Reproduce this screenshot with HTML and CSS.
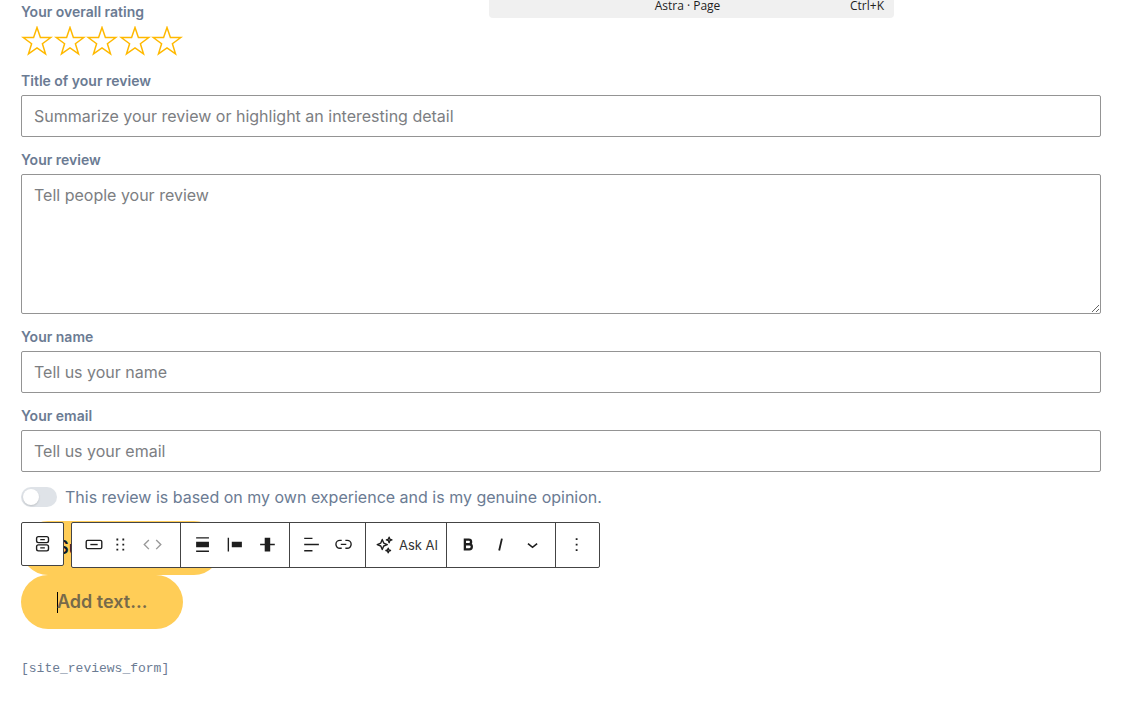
FILE: index.html
```html
<!DOCTYPE html>
<html lang="en">
<head>
  <meta charset="UTF-8">
  <meta name="viewport" content="width=device-width, initial-scale=1.0">
  <title>Astra · Page</title>
  <link rel="stylesheet" href="styles.css">
</head>
<body>
  <button type="button" class="command-bar">
    <span class="command-title">Astra · Page</span>
    <span>Ctrl+K</span>
  </button>

  <svg width="0" height="0" class="sprite">
    <symbol id="star" viewBox="0 0 32 32">
      <path d="M16 1.500l3.400 9.900 10.400.1-8.400 6.200 3.100 10.200-8.500-6-8.500 6 3.100-10.200-8.400-6.200 10.400-.1z" fill="none" stroke="#ffb900" stroke-width="1.500"/>
    </symbol>
  </svg>

  <form class="review-form">
    <div class="field">
      <span class="field-label" id="rating-label">Your overall rating</span>
      <div class="stars" role="radiogroup" aria-labelledby="rating-label">
        <label><input type="radio" name="rating" value="1" aria-label="1 star"><svg><use href="#star"/></svg></label>
        <label><input type="radio" name="rating" value="2" aria-label="2 stars"><svg><use href="#star"/></svg></label>
        <label><input type="radio" name="rating" value="3" aria-label="3 stars"><svg><use href="#star"/></svg></label>
        <label><input type="radio" name="rating" value="4" aria-label="4 stars"><svg><use href="#star"/></svg></label>
        <label><input type="radio" name="rating" value="5" aria-label="5 stars"><svg><use href="#star"/></svg></label>
      </div>
    </div>
    <div class="field">
      <label class="field-label" for="title">Title of your review</label>
      <input class="control" type="text" id="title" placeholder="Summarize your review or highlight an interesting detail">
    </div>
    <div class="field">
      <label class="field-label" for="content">Your review</label>
      <textarea class="control" id="content" placeholder="Tell people your review"></textarea>
    </div>
    <div class="field">
      <label class="field-label" for="name">Your name</label>
      <input class="control" type="text" id="name" placeholder="Tell us your name">
    </div>
    <div class="field">
      <label class="field-label" for="email">Your email</label>
      <input class="control" type="email" id="email" placeholder="Tell us your email">
    </div>
    <div class="terms">
      <input class="toggle" type="checkbox" id="terms">
      <label for="terms">This review is based on my own experience and is my genuine opinion.</label>
    </div>

    <div class="buttons">
      <button type="submit" class="btn">Submit Review</button>
      <button type="button" class="btn btn-empty"><span class="caret"></span>Add text…</button>

      <div class="toolbars">
        <div class="toolbar parent">
          <button type="button" aria-label="Select parent block: Buttons">
            <svg width="24" height="24" viewBox="0 0 24 24" fill="none" stroke="#1e1e1e" stroke-width="1.5"><rect x="5" y="4" width="13" height="6.500" rx="2"/><rect x="5" y="13" width="13" height="6.500" rx="2"/><path d="M9 7.250h5M9 16.250h5"/></svg>
          </button>
        </div>
        <div class="toolbar">
          <div class="group group-block">
            <button type="button" aria-label="Button">
              <svg width="24" height="24" viewBox="0 0 24 24" fill="none" stroke="#1e1e1e" stroke-width="1.5"><rect x="3.500" y="7" width="17" height="9" rx="1.5"/><path d="M8 11.500h8"/></svg>
            </button>
            <button type="button" aria-label="Drag">
              <svg width="24" height="24" viewBox="0 0 24 24" fill="#1e1e1e"><path d="M7 5h2v2H7zM13.500 5h2v2h-2zM7 10.500h2v2H7zM13.500 10.500h2v2h-2zM7 16h2v2H7zM13.500 16h2v2h-2z"/></svg>
            </button>
            <button type="button" aria-label="Move" class="movers" disabled>
              <svg width="24" height="24" viewBox="0 0 24 24" fill="none" stroke="#999" stroke-width="1.5"><path d="M7.500 6.500l-5 5 5 5M15.500 6.500l5 5-5 5"/></svg>
            </button>
          </div>
          <div class="group group-layout">
            <button type="button" aria-label="Align">
              <svg width="24" height="24" viewBox="0 0 24 24" fill="#1e1e1e"><path d="M4.500 3.500h14V5h-14zM4.500 8.500h14v6h-14zM4.500 18h14v1.500h-14z"/></svg>
            </button>
            <button type="button" aria-label="Justify left">
              <svg width="24" height="24" viewBox="0 0 24 24" fill="#1e1e1e"><path d="M4 4h1.500v15H4zM8.500 8.500h11v6h-11z"/></svg>
            </button>
            <button type="button" aria-label="Vertical align">
              <svg width="24" height="24" viewBox="0 0 24 24" fill="#1e1e1e"><path d="M4.500 10.750h16v1.500h-16zM9.500 4h6v15h-6z"/></svg>
            </button>
          </div>
          <div class="group group-text">
            <button type="button" aria-label="Align text">
              <svg width="24" height="24" viewBox="0 0 24 24" fill="#1e1e1e"><path d="M3.500 4h9v1.500h-9zM3.500 10.750h16v1.500h-16zM3.500 17.500h9V19h-9z"/></svg>
            </button>
            <button type="button" aria-label="Link">
              <svg width="24" height="24" viewBox="0 0 24 24" fill="none" stroke="#1e1e1e" stroke-width="1.500"><path d="M9.500 7H7.500a4.300 4.300 0 0 0 0 8.600h2M13.500 7h2a4.300 4.300 0 0 1 0 8.600h-2M8.500 11.300h6"/></svg>
            </button>
          </div>
          <div class="group group-ai">
            <button type="button">
              <svg width="24" height="24" viewBox="0 0 24 24" fill="none" stroke="#1e1e1e" stroke-width="1.500" stroke-linejoin="round"><path d="M9 6l1.600 3.900 3.900 1.600-3.900 1.600L9 17l-1.600-3.900-3.900-1.600 3.900-1.600zM16.500 3.500l.8 2.200 2.200.8-2.200.8-.8 2.200-.8-2.200-2.200-.8 2.200-.8zM15.500 15.500l.7 1.800 1.800.7-1.800.7-.7 1.800-.7-1.800-1.800-.7 1.800-.7z"/></svg>
              Ask AI
            </button>
          </div>
          <div class="group group-format">
            <button type="button" aria-label="Bold">
              <svg width="24" height="24" viewBox="0 0 24 24" fill="none" stroke="#1e1e1e" stroke-width="2.500"><path d="M7.500 6.200h4.300a2.500 2.500 0 0 1 0 5H7.500zM7.500 11.200h4.800a2.800 2.800 0 0 1 0 5.600H7.500zM7.500 5v13"/></svg>
            </button>
            <button type="button" aria-label="Italic">
              <svg width="24" height="24" viewBox="0 0 24 24" fill="none" stroke="#1e1e1e" stroke-width="2"><path d="M13 5l-3 13"/></svg>
            </button>
            <button type="button" aria-label="More">
              <svg width="24" height="24" viewBox="0 0 24 24" fill="none" stroke="#1e1e1e" stroke-width="1.800"><path d="M6.500 10.500l5 4 5-4"/></svg>
            </button>
          </div>
          <div class="group group-more">
            <button type="button" aria-label="Options">
              <svg width="24" height="24" viewBox="0 0 24 24" fill="#1e1e1e"><path d="M9.500 4.500h2v2h-2zM9.500 10.500h2v2h-2zM9.500 16.500h2v2h-2z"/></svg>
            </button>
          </div>
        </div>
      </div>
    </div>
  </form>

  <p class="shortcode">[site_reviews_form]</p>
</body>
</html>
```
FILE: styles.css
```css
* {
  box-sizing: border-box;
}
body {
  margin: 0;
  padding: 2px 31px 0 21px;
  font-family: Inter, sans-serif;
  font-size: 16px;
  line-height: 24px;
  color: #6b7b93;
  background: #fff;
}
button {
  font-family: inherit;
  border: none;
  cursor: pointer;
}
.sprite {
  position: absolute;
}
.command-bar {
  position: absolute;
  top: 0;
  left: 489px;
  width: 405px;
  height: 18px;
  padding: 0 10px 6px 36px;
  display: flex;
  align-items: center;
  background: #f0f0f0;
  border-radius: 0 0 4px 4px;
  font-family: "Open Sans", sans-serif;
  font-size: 12px;
  line-height: 12px;
  color: #1e1e1e;
}
.command-title {
  flex: 1;
}
.review-form {
  display: flex;
  flex-direction: column;
  gap: 13px;
}
.field {
  display: flex;
  flex-direction: column;
  gap: 4px;
}
.field-label {
  font-size: 14px;
  font-weight: 600;
  line-height: 20px;
}
.stars {
  display: flex;
  justify-content: space-between;
  width: 162px;
}
.stars label {
  cursor: pointer;
}
.stars input {
  position: absolute;
  opacity: 0;
}
.stars svg {
  display: block;
  width: 32px;
  height: 32px;
}
.control {
  width: 100%;
  height: 42px;
  padding: 8px 12px;
  font-family: inherit;
  font-size: 16px;
  line-height: 24px;
  border: 1px solid #949494;
  border-radius: 2px;
  background: #fff;
}
.control::placeholder {
  color: #7c7e82;
}
textarea.control {
  display: block;
  height: 140px;
  resize: vertical;
}
.terms {
  display: flex;
  align-items: center;
  gap: 8px;
}
.toggle {
  appearance: none;
  width: 36px;
  height: 20px;
  margin: 0;
  padding: 2px;
  border-radius: 10px;
  background: #dfe3e8;
}
.toggle::before {
  content: "";
  display: block;
  width: 16px;
  height: 16px;
  border-radius: 50%;
  background: #fff;
  box-shadow: 0 1px 2px rgba(0, 0, 0, 0.15);
}
.buttons {
  position: relative;
  display: flex;
  flex-direction: column;
  align-items: flex-start;
  margin-top: -1px;
}
.btn {
  height: 54px;
  padding: 0 36px;
  border-radius: 27px;
  background: #ffcd57;
  color: #0f172a;
  font-size: 18px;
  font-weight: 600;
  line-height: 24px;
}
.btn-empty {
  display: flex;
  align-items: center;
  color: #776a4a;
}
.caret {
  width: 1px;
  height: 21px;
  margin-right: -1px;
  background: #000;
}
.toolbars {
  position: absolute;
  top: 1px;
  left: 0;
  display: flex;
  align-items: flex-start;
  gap: 7px;
}
.toolbar {
  display: flex;
  height: 46px;
  border: 1px solid #444;
  border-radius: 2px;
  background: #fff;
}
.toolbar.parent {
  width: 43px;
  height: 44px;
  justify-content: center;
}
.toolbar button {
  display: flex;
  align-items: center;
  justify-content: center;
  padding: 0;
  background: none;
  color: #333;
  font-size: 13px;
}
.toolbar svg {
  display: block;
  width: 22px;
  height: 22px;
}
.group {
  display: flex;
  align-items: stretch;
  justify-content: center;
  gap: 10px;
}
.group + .group {
  border-left: 1px solid #444;
}
.group-block {
  width: 108px;
  gap: 5px;
  padding-right: 6px;
}
.group-block .movers {
  margin-left: 5px;
}
.group-layout {
  width: 109px;
}
.group-text {
  width: 76px;
}
.group-ai {
  width: 81px;
}
.toolbar .group-ai button {
  gap: 3px;
}
.group-format {
  width: 109px;
}
.group-more {
  width: 44px;
}
.shortcode {
  margin: 28px 0 0;
  font-family: "Liberation Mono", monospace;
  font-size: 13px;
}
```
